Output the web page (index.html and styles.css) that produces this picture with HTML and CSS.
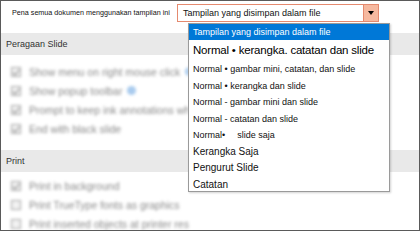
FILE: index.html
```html
<!DOCTYPE html>
<html lang="id">
<head>
    <meta charset="UTF-8">
    <meta name="viewport" content="width=device-width, initial-scale=1.0">
    <title>Opsi Tampilan</title>
    <link rel="stylesheet" href="styles.css">
</head>
<body>
    <div class="frame">
        <div class="top">
            <div class="label">Pena semua dokumen menggunakan tampilan ini</div>
            <div class="select">
                <div class="select-text">Tampilan yang disimpan dalam file</div>
                <div class="select-btn"><span class="tri"></span></div>
            </div>
        </div>

        <div class="band">Peragaan Slide</div>
        <div class="opts">
            <div class="row"><span class="box on"></span>Show menu on right mouse click<span class="info"></span></div>
            <div class="row"><span class="box on"></span>Show popup toolbar<span class="info"></span></div>
            <div class="row"><span class="box on"></span>Prompt to keep ink annotations when exiting</div>
            <div class="row"><span class="box on"></span>End with black slide</div>
        </div>

        <div class="band">Print</div>
        <div class="opts print">
            <div class="row"><span class="box on"></span>Print in background</div>
            <div class="row"><span class="box"></span>Print TrueType fonts as graphics</div>
            <div class="row"><span class="box"></span>Print inserted objects at printer resolution</div>
        </div>

        <!-- open list of the select -->
        <div class="dropdown">
            <div class="item selected">Tampilan yang disimpan dalam file</div>
            <div class="item big">Normal • kerangka. catatan dan slide</div>
            <div class="item">Normal • gambar mini, catatan, dan slide</div>
            <div class="item">Normal • kerangka dan slide</div>
            <div class="item">Normal - gambar mini dan slide</div>
            <div class="item">Normal - catatan dan slide</div>
            <div class="item">Normal•<span class="gap">slide saja</span></div>
            <div class="item mid">Kerangka Saja</div>
            <div class="item mid">Pengurut Slide</div>
            <div class="item mid">Catatan</div>
        </div>
    </div>
</body>
</html>
```

FILE: styles.css
```css
html, body {
    margin: 0;
    padding: 0;
    background: #fff;
}
body {
    font-family: "Liberation Sans", Arial, sans-serif;
    color: #222;
}
.frame {
    position: relative;
    width: 420px;
    height: 231px;
    box-sizing: border-box;
    border: 1px solid #5a5a5a;
    overflow: hidden;
    background: #fff;
}
.top {
    display: flex;
    height: 32px;
    box-sizing: border-box;
    padding-top: 3px;
}
.label {
    width: 176px;
    padding-left: 11px;
    box-sizing: border-box;
    font-size: 7.2px;
    line-height: 18px;
    color: #111;
    white-space: nowrap;
    overflow: hidden;
}
.select {
    display: flex;
    width: 202px;
    height: 18px;
    box-sizing: border-box;
    border: 1px solid #e58a6f;
}
.select-text {
    flex: 1;
    padding-left: 5px;
    font-size: 9px;
    line-height: 16px;
    color: #111;
}
.select-btn {
    width: 14px;
    background: #f6b9a0;
    border-left: 1px solid #e58a6f;
    display: flex;
    align-items: center;
    justify-content: center;
}
.tri {
    width: 0;
    height: 0;
    border-left: 3.5px solid transparent;
    border-right: 3.5px solid transparent;
    border-top: 4px solid #000;
}
.band {
    height: 22px;
    background: #e9e9e9;
    padding-left: 5px;
    font-size: 9px;
    line-height: 22px;
    color: #333;
}
.opts {
    width: 188px;
    overflow: hidden;
    padding: 7px 0 12px;
    filter: blur(1.4px);
}
.opts.print {
    padding-top: 4px;
}
.row {
    display: flex;
    align-items: center;
    height: 19px;
    padding-left: 10px;
    font-size: 10.5px;
    color: #8a8a8a;
    white-space: nowrap;
}
.box {
    position: relative;
    width: 10px;
    height: 10px;
    box-sizing: border-box;
    border: 1px solid #a5a5a5;
    background: #f2f2f2;
    margin-right: 8px;
    flex: none;
}
.box.on::after {
    content: "";
    position: absolute;
    left: 2px;
    top: 0;
    width: 3px;
    height: 6px;
    border-right: 1.5px solid #888;
    border-bottom: 1.5px solid #888;
    transform: rotate(40deg);
}
.info {
    width: 9px;
    height: 9px;
    border-radius: 50%;
    background: #a9cbee;
    margin-left: 5px;
    flex: none;
}
.dropdown {
    position: absolute;
    left: 187px;
    top: 22px;
    width: 202px;
    height: 169px;
    box-sizing: border-box;
    border: 1px solid #9a9a9a;
    background: #fff;
    box-shadow: 1px 1px 2px rgba(0, 0, 0, 0.18);
    z-index: 2;
}
.item {
    height: 16.5px;
    line-height: 16.5px;
    padding-left: 4px;
    font-size: 9px;
    color: #111;
    white-space: nowrap;
}
.item.selected {
    height: 16px;
    line-height: 16px;
    background: #0078d7;
    color: #fff;
}
.item.big {
    height: 21px;
    line-height: 21px;
    font-size: 11.5px;
    letter-spacing: -0.2px;
    color: #000;
}
.item.mid {
    font-size: 10px;
}
.gap {
    margin-left: 12px;
}
```
